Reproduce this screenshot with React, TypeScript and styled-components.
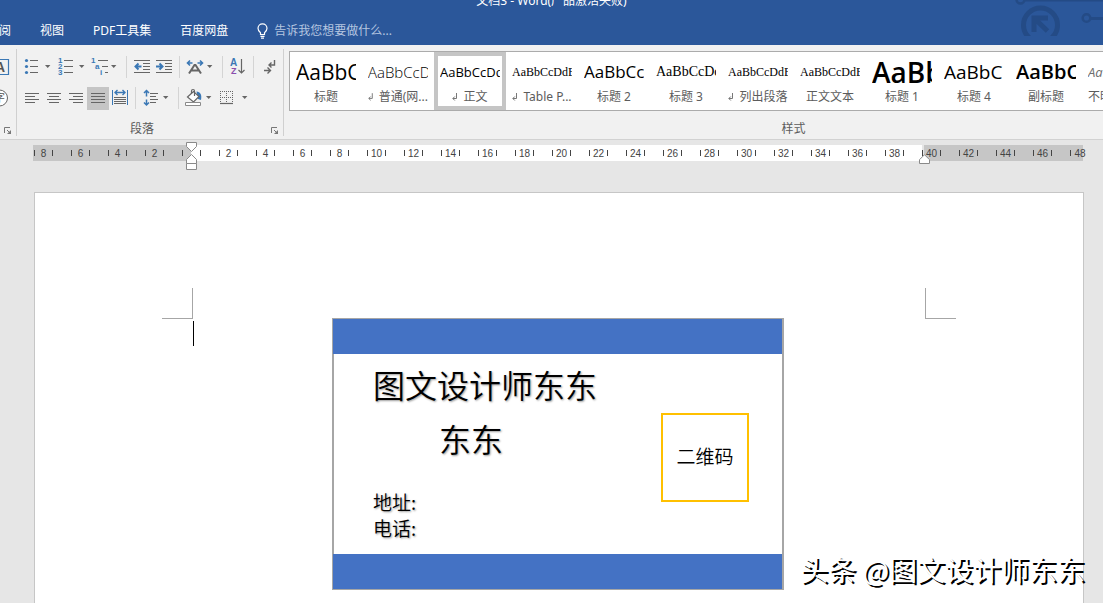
import React from 'react';
import styled, { createGlobalStyle, css } from 'styled-components';

const UI_FONT = '"Noto Sans", "Noto Sans CJK SC", sans-serif';
const CJK_FONT = '"Noto Sans CJK SC", sans-serif';

const INK = '#666666';
const BLUE = '#3b78b5';

const GlobalStyle = createGlobalStyle`
  *, *::before, *::after { box-sizing: border-box; }
  body { margin: 0; background: #e6e6e6; font-family: ${UI_FONT}; font-size: 12px; }
  button, input { font: inherit; color: inherit; border: 0; padding: 0; margin: 0; background: none; }
`;

const Window = styled.div`
  display: flex;
  flex-direction: column;
  height: 100vh;
  overflow: hidden;
`;

/* ---------- title bar and tabs ---------- */

const Header = styled.header`
  position: relative;
  flex: none;
  display: flex;
  flex-direction: column;
  background: #2b579a;
  color: #ffffff;
  overflow: hidden;
`;

const Title = styled.h1`
  margin: -7px 0 0;
  height: 23px;
  line-height: 16px;
  font-size: 12px;
  font-weight: 400;
  text-align: center;
`;

const TabBar = styled.nav`
  display: flex;
  align-items: center;
  gap: 29px;
  height: 29px;
  margin-left: -1px;
`;

const Tab = styled.button`
  flex: none;
  line-height: 16px;
  white-space: nowrap;
`;

const TellMe = styled.label`
  display: flex;
  align-items: center;
  gap: 6px;
`;

const TellMeInput = styled.input`
  width: 160px;
  height: 16px;
  line-height: 16px;
  outline: none;
  &::placeholder { color: #b5c6e0; opacity: 1; }
`;

const Decoration = styled.svg`
  position: absolute;
  top: 0;
  right: 0;
`;

/* ---------- ribbon ---------- */

const Ribbon = styled.section`
  flex: none;
  display: flex;
  height: 95px;
  padding-top: 4px;
  background: #f1f1f1;
  border-bottom: 1px solid #d2d2d2;
  overflow: hidden;
`;

const Group = styled.div<{ $width: number }>`
  flex: 0 0 ${p => p.$width}px;
  min-width: 0;
  display: flex;
  flex-direction: column;
  height: 87px;
  border-right: 1px solid #d0d0d0;
`;

const GroupBody = styled.div`
  flex: 1;
  display: flex;
  flex-direction: column;
  gap: 9px;
  padding-top: 7px;
`;

const GroupFooter = styled.div`
  display: flex;
  align-items: center;
  height: 14px;
  line-height: 14px;
  color: #5c5c5c;
`;

const GroupName = styled.span`
  flex: 1;
  text-align: center;
`;

const Launcher = styled.button`
  display: flex;
  margin: 4px 4px 0;
`;

const ToolRow = styled.div<{ $indent: number }>`
  display: flex;
  align-items: center;
  height: 22px;
  padding-left: ${p => p.$indent}px;
`;

const ToolButton = styled.button<{ $pressed?: boolean; $split?: boolean; $narrow?: boolean }>`
  flex: none;
  display: flex;
  align-items: center;
  width: ${p => (p.$split ? 34 : p.$narrow ? 10 : 22)}px;
  height: ${p => (p.$pressed ? 23 : 22)}px;
  ${p => p.$pressed && css`background: #c5c5c5;`}
`;

const CaretBox = styled.span<{ $near?: boolean }>`
  display: flex;
  justify-content: center;
  width: ${p => (p.$near ? 8 : 12)}px;
`;

const Divider = styled.span`
  flex: none;
  width: 1px;
  height: 22px;
  margin: 0 4px;
  background: #d4d4d4;
`;

/* ---------- style gallery ---------- */

const Gallery = styled.div`
  display: flex;
  height: 60px;
  margin: 2px 0 0 5px;
  background: #ffffff;
  border: 1px solid #ababab;
`;

const StyleCard = styled.button<{ $selected?: boolean }>`
  flex: 0 0 72px;
  display: flex;
  flex-direction: column;
  gap: 1px;
  padding: 4px 6px 0;
  ${p => p.$selected && css`box-shadow: inset 0 0 0 4px #c5c5c5;`}
`;

const Sample = styled.span<{ $size: number; $face: string; $weight?: number; $muted?: boolean }>`
  width: 60px;
  height: 32px;
  line-height: 32px;
  overflow: hidden;
  white-space: nowrap;
  text-align: left;
  font-family: ${p => p.$face};
  font-size: ${p => p.$size}px;
  font-weight: ${p => p.$weight ?? 400};
  font-style: ${p => (p.$muted ? 'italic' : 'normal')};
  color: ${p => (p.$muted ? '#6e6e6e' : '#000000')};
`;

const StyleLabel = styled.span`
  display: flex;
  align-items: center;
  justify-content: center;
  gap: 6px;
  width: 60px;
  height: 16px;
  line-height: 16px;
  white-space: nowrap;
  color: #5c5c5c;
`;

/* ---------- ruler ---------- */

const RulerStrip = styled.div`
  flex: none;
  padding: 5px 20px 31px 33px;
`;

const RulerBar = styled.div`
  position: relative;
  height: 16px;
  background: linear-gradient(
    to right,
    #c6c6c6 0 158px,
    #ffffff 158px calc(100% - 161px),
    #e6e6e6 calc(100% - 161px) calc(100% - 159px),
    #c6c6c6 calc(100% - 159px) 100%
  );
`;

const RulerMarks = styled.div`
  display: flex;
  align-items: center;
  height: 16px;
  margin: 0 -15px 0 -8px;
`;

const RulerCell = styled.span`
  flex: 1 1 0;
  display: flex;
  justify-content: center;
`;

const RulerNumber = styled.span<{ $open?: boolean }>`
  display: flex;
  align-items: center;
  justify-content: center;
  width: 19px;
  height: 6px;
  font-family: "Liberation Sans", Arial, sans-serif;
  font-size: 10px;
  color: #444444;
  border-left: 1px solid #444444;
  border-right: ${p => (p.$open ? 0 : 1)}px solid #444444;
`;

const IndentMarker = styled.svg<{ $side: 'left' | 'right' }>`
  position: absolute;
  ${p =>
    p.$side === 'left'
      ? css`left: 153px; top: -3px;`
      : css`right: 153px; top: 9px;`}
`;

/* ---------- document ---------- */

const Page = styled.main`
  flex: 1 0 auto;
  margin: 0 19px 0 34px;
  padding-top: 95px;
  background: #ffffff;
  border: 1px solid #c6c6c6;
  border-bottom: 0;
`;

const MarginMarks = styled.div`
  display: flex;
  justify-content: space-between;
  padding: 0 127px;
`;

const MarginMark = styled.span<{ $side: 'left' | 'right' }>`
  width: 31px;
  height: 31px;
  border-bottom: 1px solid #a6a6a6;
  ${p =>
    p.$side === 'left'
      ? css`border-right: 1px solid #a6a6a6;`
      : css`border-left: 1px solid #a6a6a6;`}
`;

const TextArea = styled.div`
  display: grid;
  grid-template-columns: 1fr auto 1fr;
  margin-top: -1px;
  padding: 0 160px 0 158px;
`;

const TextCaret = styled.span`
  width: 1px;
  height: 25px;
  margin-top: 3px;
  background: #000000;
`;

const BusinessCard = styled.article`
  display: flex;
  flex-direction: column;
  width: 452px;
  border: 1px solid #a6a6a6;
  border-right-width: 2px;
  font-family: ${CJK_FONT};
  font-weight: 350;
  color: #000000;
`;

const Band = styled.div`
  height: 35px;
  background: #4472c4;
`;

const CardBody = styled.div`
  display: flex;
  justify-content: space-between;
  height: 200px;
  padding: 0 33px 0 39px;
  border-left: 1px solid #a6a6a6;
`;

const CardText = styled.div`
  display: flex;
  flex-direction: column;
  text-shadow: 1px 1px 2px rgba(0, 0, 0, 0.4);
`;

const CardTitle = styled.h2`
  margin: 3px 0 0;
  font-size: 32px;
  font-weight: 350;
  line-height: 54px;
`;

const CardName = styled.p`
  margin: 0;
  padding-right: 28px;
  font-size: 32px;
  line-height: 54px;
  text-align: center;
`;

const CardContact = styled.p`
  margin: 24px 0 0;
  font-size: 19px;
  line-height: 26px;
`;

const QrBox = styled.div`
  display: flex;
  align-items: center;
  justify-content: center;
  width: 88px;
  height: 89px;
  margin-top: 59px;
  padding-bottom: 5px;
  border: 2px solid #ffc000;
  font-size: 19px;
`;

const Watermark = styled.div`
  position: absolute;
  right: 18px;
  bottom: 14px;
  font-family: ${CJK_FONT};
  font-size: 28px;
  line-height: 40px;
  white-space: nowrap;
  color: #ffffff;
  text-shadow: 2px 2px 0 #000000;
`;

/* ---------- icons ---------- */

type GlyphProps = { children: React.ReactNode; w?: number };

const Glyph = ({ children, w = 22 }: GlyphProps) => (
  <svg width={w} height={22} viewBox={`0 0 ${w} 22`} fill="none" stroke={INK} strokeWidth={1} aria-hidden="true">
    {children}
  </svg>
);

const Caret = ({ near }: { near?: boolean }) => (
  <CaretBox $near={near}>
    <svg width={6} height={4} viewBox="0 0 6 4" aria-hidden="true">
      <path d="M0 0h5.4L2.7 3z" fill={INK} />
    </svg>
  </CaretBox>
);

const digit = { fill: BLUE, stroke: 'none', fontSize: 8, fontWeight: 700, fontFamily: 'Liberation Sans, sans-serif' };

const BulletsIcon = () => (
  <Glyph>
    <g fill={BLUE} stroke="none">
      <circle cx="6.5" cy="4.5" r="1.6" /><circle cx="6.5" cy="10.5" r="1.6" /><circle cx="6.5" cy="16.5" r="1.6" />
    </g>
    <path d="M10 4.5h8M10 10.5h8M10 16.5h8" />
  </Glyph>
);

const NumberingIcon = () => (
  <Glyph>
    <text x="4" y="7" {...digit}>1</text>
    <text x="4" y="13" {...digit}>2</text>
    <text x="4" y="19" {...digit}>3</text>
    <path d="M10 4.5h9M10 10.5h9M10 16.5h9" />
  </Glyph>
);

const MultilevelIcon = () => (
  <Glyph>
    <text x="3" y="7" {...digit}>1</text>
    <text x="7" y="13" {...digit}>a</text>
    <text x="12" y="19" {...digit}>i</text>
    <path d="M10 4.5h10M14 10.5h6M17 16.5h3" />
  </Glyph>
);

const OutdentIcon = () => (
  <Glyph>
    <path d="M3 4.5h16M12 7.5h7M12 10.5h7M12 13.5h7M3 16.5h16" />
    <path d="M10.5 10.5h-6M7.5 7.5l-3 3 3 3" stroke={BLUE} strokeWidth={2} />
  </Glyph>
);

const IndentIcon = () => (
  <Glyph>
    <path d="M3 4.5h16M12 7.5h7M12 10.5h7M12 13.5h7M3 16.5h16" />
    <path d="M3 10.5h6.5M6.5 7.5l3 3-3 3" stroke={BLUE} strokeWidth={2} />
  </Glyph>
);

const AsianLayoutIcon = () => (
  <Glyph>
    <path d="M3.5 7h5M6 4.5L3.5 7 6 9.500M13.500 7h5M16 4.500L18.500 7 16 9.500" stroke={BLUE} strokeWidth={1.600} />
    <path d="M5 17.500l5.500-8.500h1l5.500 8.500M7.500 14.500h7" strokeWidth={2} />
  </Glyph>
);

const SortIcon = () => (
  <Glyph>
    <text x="3" y="10" fill={BLUE} stroke="none" fontSize="10" fontWeight="700" fontFamily="Liberation Sans, sans-serif">A</text>
    <text x="4" y="18" fill="#8a4fae" stroke="none" fontSize="9" fontWeight="700" fontFamily="Liberation Sans, sans-serif">Z</text>
    <path d="M14.500 3v14M11.500 14l3 3 3-3" strokeWidth={1.200} />
  </Glyph>
);

const MarksIcon = () => (
  <Glyph>
    <path d="M16.500 4v5h-5M13.500 6.500L11 9l2.500 2.500M6 14.500h6M9.500 11.500l3 3-3 3" strokeWidth={1.400} />
  </Glyph>
);

const AlignLeftIcon = () => (
  <Glyph><path d="M4 6.500h14M4 9.500h10M4 12.500h14M4 15.500h10" /></Glyph>
);
const AlignCenterIcon = () => (
  <Glyph><path d="M4 6.500h14M6 9.500h10M4 12.500h14M6 15.500h10" /></Glyph>
);
const AlignRightIcon = () => (
  <Glyph><path d="M4 6.500h14M8 9.500h10M4 12.500h14M8 15.500h10" /></Glyph>
);
const JustifyIcon = () => (
  <Glyph><path d="M4 6.500h14M4 9.500h14M4 12.500h14M4 15.500h14" /></Glyph>
);

const DistributeIcon = () => (
  <Glyph>
    <path d="M5 10.500h12M5 12.500h12M5 14.500h12M5 16.500h12" />
    <path d="M3.500 3v15M18.500 3v15" stroke={BLUE} />
    <path d="M5.500 5.500h11M8.500 3L6 5.500 8.500 8M13.500 3L16 5.500 13.500 8" stroke={BLUE} strokeWidth={1.400} />
  </Glyph>
);

const LineSpacingIcon = () => (
  <Glyph>
    <path d="M10 6.500h8M10 9.500h6M10 12.500h8M10 15.500h6" />
    <path d="M6.500 4v5.500M6.500 12.500V18M4 6l2.500-2.500L9 6M4 15.500L6.500 18 9 15.500" stroke={BLUE} strokeWidth={1.500} />
  </Glyph>
);

const ShadingIcon = () => (
  <Glyph>
    <path d="M13.500 4.500c4 .5 5.500 3 4.500 8.500l-3-1z" fill={BLUE} stroke="none" />
    <path d="M4.500 10l6-5.500 5.500 5-5.500 5.500z" fill="#ffffff" strokeWidth={1.200} />
    <path d="M8.500 7V4c0-2 3-2 3 0v5" strokeWidth={1.200} />
    <path d="M2.500 15.500h15v3h-15z" fill="#ffffff" stroke="#8a8a8a" />
  </Glyph>
);

const BordersIcon = () => (
  <Glyph>
    <path d="M3 4.500h13M3 10.500h13M3.500 4v12M9.500 4v12M15.500 4v12" strokeDasharray="1 1" />
    <path d="M3 16.500h13" strokeWidth={1.200} />
  </Glyph>
);

const LauncherIcon = () => (
  <svg width={8} height={8} viewBox="0 0 8 8" fill="none" stroke="#777777" aria-hidden="true">
    <path d="M.5 6V.5H6M3 3l3 3" />
    <path d="M7 3v4H3z" fill="#777777" stroke="none" />
  </svg>
);

const CharBorderIcon = () => (
  <Glyph w={10}>
    <path d="M-2 3.500H8.500V18.500H-2" stroke={BLUE} strokeWidth={1.200} />
    <text x="-5" y="16" fill="#555555" stroke="none" fontSize="14" fontWeight="700" fontFamily="Liberation Sans, sans-serif">A</text>
  </Glyph>
);

const EncloseIcon = () => (
  <Glyph w={10}>
    <circle cx="-.5" cy="11" r="8" fill="#ffffff" />
    <text x="-6" y="15" fill="#555555" stroke="none" fontSize="11" fontFamily="Noto Sans CJK SC, sans-serif">字</text>
  </Glyph>
);

const ReturnMark = () => (
  <svg width={5} height={8} viewBox="0 0 5 8" fill="none" stroke="#777777" aria-hidden="true">
    <path d="M4.500 0v5.500H1M2.800 3.500L.8 5.500l2 2" />
  </svg>
);

const BulbIcon = () => (
  <svg width={11} height={16} viewBox="0 0 11 16" fill="none" stroke="#ffffff" strokeWidth={1.200} aria-hidden="true">
    <path d="M3.500 11.500V9.800C2 8.600 1 7.300 1 5.300a4.500 4.500 0 0 1 9 0c0 2-1 3.300-2.500 4.500v1.700zM3.500 13.400h4M4 15.200h3" />
  </svg>
);

const CircuitArt = () => (
  <Decoration width={90} height={40} viewBox="0 0 90 40" fill="none" stroke="#244b86" aria-hidden="true">
    <clipPath id="badge"><rect width="90" height="36" /></clipPath>
    <g clipPath="url(#badge)">
      <circle cx="27.500" cy="25" r="17" strokeWidth={5} />
      <path d="M21 32V18h14M21.500 18.500l13 12.500" strokeWidth={5} />
    </g>
    <circle cx="7.500" cy="-.5" r="4" strokeWidth={2.500} />
    <path d="M12 .5h78" strokeWidth={2} />
    <circle cx="73.500" cy="18" r="3.800" strokeWidth={2.500} />
    <path d="M78 18.500h12" strokeWidth={3} />
  </Decoration>
);

/* ---------- data ---------- */

const SANS = '"Open Sans", "Noto Sans", sans-serif';
const SERIF = '"Liberation Serif", serif';

type StyleDef = {
  label: string; sample: string; size: number; face: string;
  weight?: number; mark?: boolean; selected?: boolean; muted?: boolean;
};

const STYLES: StyleDef[] = [
  { label: '标题', sample: 'AaBbC', size: 21, face: SANS },
  { label: '普通(网...', sample: 'AaBbCcD', size: 15, face: SANS, weight: 300, mark: true },
  { label: '正文', sample: 'AaBbCcDd', size: 13, face: SANS, mark: true, selected: true },
  { label: 'Table P...', sample: 'AaBbCcDdE', size: 12, face: SERIF, mark: true },
  { label: '标题 2', sample: 'AaBbCc', size: 17, face: SANS, weight: 500 },
  { label: '标题 3', sample: 'AaBbCcDd', size: 14, face: SERIF },
  { label: '列出段落', sample: 'AaBbCcDdE', size: 12, face: SERIF, mark: true },
  { label: '正文文本', sample: 'AaBbCcDdE', size: 12, face: SERIF },
  { label: '标题 1', sample: 'AaBb', size: 28, face: SANS, weight: 600 },
  { label: '标题 4', sample: 'AaBbC', size: 19, face: SANS },
  { label: '副标题', sample: 'AaBbC', size: 20, face: SANS, weight: 600 },
  { label: '不明显强调', sample: 'AaBbCcD', size: 13, face: SANS, muted: true },
];

const TABS = ['阅', '视图', 'PDF工具集', '百度网盘'];

const RULER = Array.from({ length: 29 }, (_, i) => Math.abs((i - 4) * 2));

type ToolProps = { name: string; pressed?: boolean; narrow?: boolean; children: React.ReactNode };

const Tool = ({ name, pressed, narrow, children }: ToolProps) => (
  <ToolButton aria-label={name} aria-pressed={pressed} $pressed={pressed} $narrow={narrow}>{children}</ToolButton>
);

const SplitTool = ({ name, near, children }: { name: string; near?: boolean; children: React.ReactNode }) => (
  <ToolButton aria-label={name} $split>{children}<Caret near={near} /></ToolButton>
);

export default function App() {
  return (
    <Window>
      <GlobalStyle />
      <Header>
        <CircuitArt />
        <Title>文档3 - Word(产品激活失败)</Title>
        <TabBar>
          {TABS.map(t => <Tab key={t}>{t}</Tab>)}
          <TellMe>
            <BulbIcon />
            <TellMeInput type="text" aria-label="告诉我" placeholder="告诉我您想要做什么..." />
          </TellMe>
        </TabBar>
      </Header>

      <Ribbon>
        <Group $width={17}>
          <GroupBody>
            <Tool name="字符边框" narrow><CharBorderIcon /></Tool>
            <Tool name="带圈字符" narrow><EncloseIcon /></Tool>
          </GroupBody>
          <GroupFooter><Launcher aria-label="字体设置"><LauncherIcon /></Launcher></GroupFooter>
        </Group>

        <Group $width={267}>
          <GroupBody>
            <ToolRow $indent={3}>
              <SplitTool name="项目符号"><BulletsIcon /></SplitTool>
              <SplitTool name="编号"><NumberingIcon /></SplitTool>
              <SplitTool name="多级列表" near><MultilevelIcon /></SplitTool>
              <Divider />
              <Tool name="减少缩进量"><OutdentIcon /></Tool>
              <Tool name="增加缩进量"><IndentIcon /></Tool>
              <Divider />
              <SplitTool name="中文版式" near><AsianLayoutIcon /></SplitTool>
              <Divider />
              <Tool name="排序"><SortIcon /></Tool>
              <Divider />
              <Tool name="显示编辑标记"><MarksIcon /></Tool>
            </ToolRow>
            <ToolRow $indent={4}>
              <Tool name="左对齐"><AlignLeftIcon /></Tool>
              <Tool name="居中"><AlignCenterIcon /></Tool>
              <Tool name="右对齐"><AlignRightIcon /></Tool>
              <Tool name="两端对齐" pressed><JustifyIcon /></Tool>
              <Tool name="分散对齐"><DistributeIcon /></Tool>
              <Divider />
              <SplitTool name="行和段落间距" near><LineSpacingIcon /></SplitTool>
              <Divider />
              <SplitTool name="底纹" near><ShadingIcon /></SplitTool>
              <SplitTool name="边框"><BordersIcon /></SplitTool>
            </ToolRow>
          </GroupBody>
          <GroupFooter>
            <GroupName>段落</GroupName>
            <Launcher aria-label="段落设置"><LauncherIcon /></Launcher>
          </GroupFooter>
        </Group>

        <Group $width={1020}>
          <Gallery>
            {STYLES.map(s => (
              <StyleCard key={s.label} $selected={s.selected}>
                <Sample $size={s.size} $face={s.face} $weight={s.weight} $muted={s.muted}>{s.sample}</Sample>
                <StyleLabel>{s.mark && <ReturnMark />}<span>{s.label}</span></StyleLabel>
              </StyleCard>
            ))}
          </Gallery>
          <GroupBody />
          <GroupFooter><GroupName>样式</GroupName></GroupFooter>
        </Group>
      </Ribbon>

      <RulerStrip>
        <RulerBar>
          <RulerMarks>
            {RULER.map((n, i) => (
              <RulerCell key={i}>
                <RulerNumber $open={i === RULER.length - 1}>{n === 0 ? '' : n}</RulerNumber>
              </RulerCell>
            ))}
          </RulerMarks>
          <IndentMarker $side="left" width={11} height={28} viewBox="0 0 11 28" fill="#ffffff" stroke="#8a8a8a" aria-hidden="true">
            <path d="M.5.5h10v4l-5 5-5-5zM5.500 12.500l5 5v4H.5v-4z" />
            <path d="M.5 21.500h10v6H.5z" />
          </IndentMarker>
          <IndentMarker $side="right" width={11} height={10} viewBox="0 0 11 10" fill="#ffffff" stroke="#8a8a8a" aria-hidden="true">
            <path d="M5.500.7l5 5v3.800H.5V5.700z" />
          </IndentMarker>
        </RulerBar>
      </RulerStrip>

      <Page>
        <MarginMarks>
          <MarginMark $side="left" />
          <MarginMark $side="right" />
        </MarginMarks>
        <TextArea>
          <TextCaret />
          <BusinessCard>
            <Band />
            <CardBody>
              <CardText>
                <CardTitle>图文设计师东东</CardTitle>
                <CardName>东东</CardName>
                <CardContact>地址:<br />电话:</CardContact>
              </CardText>
              <QrBox>二维码</QrBox>
            </CardBody>
            <Band />
          </BusinessCard>
        </TextArea>
      </Page>
      <Watermark>头条 @图文设计师东东</Watermark>
    </Window>
  );
}
